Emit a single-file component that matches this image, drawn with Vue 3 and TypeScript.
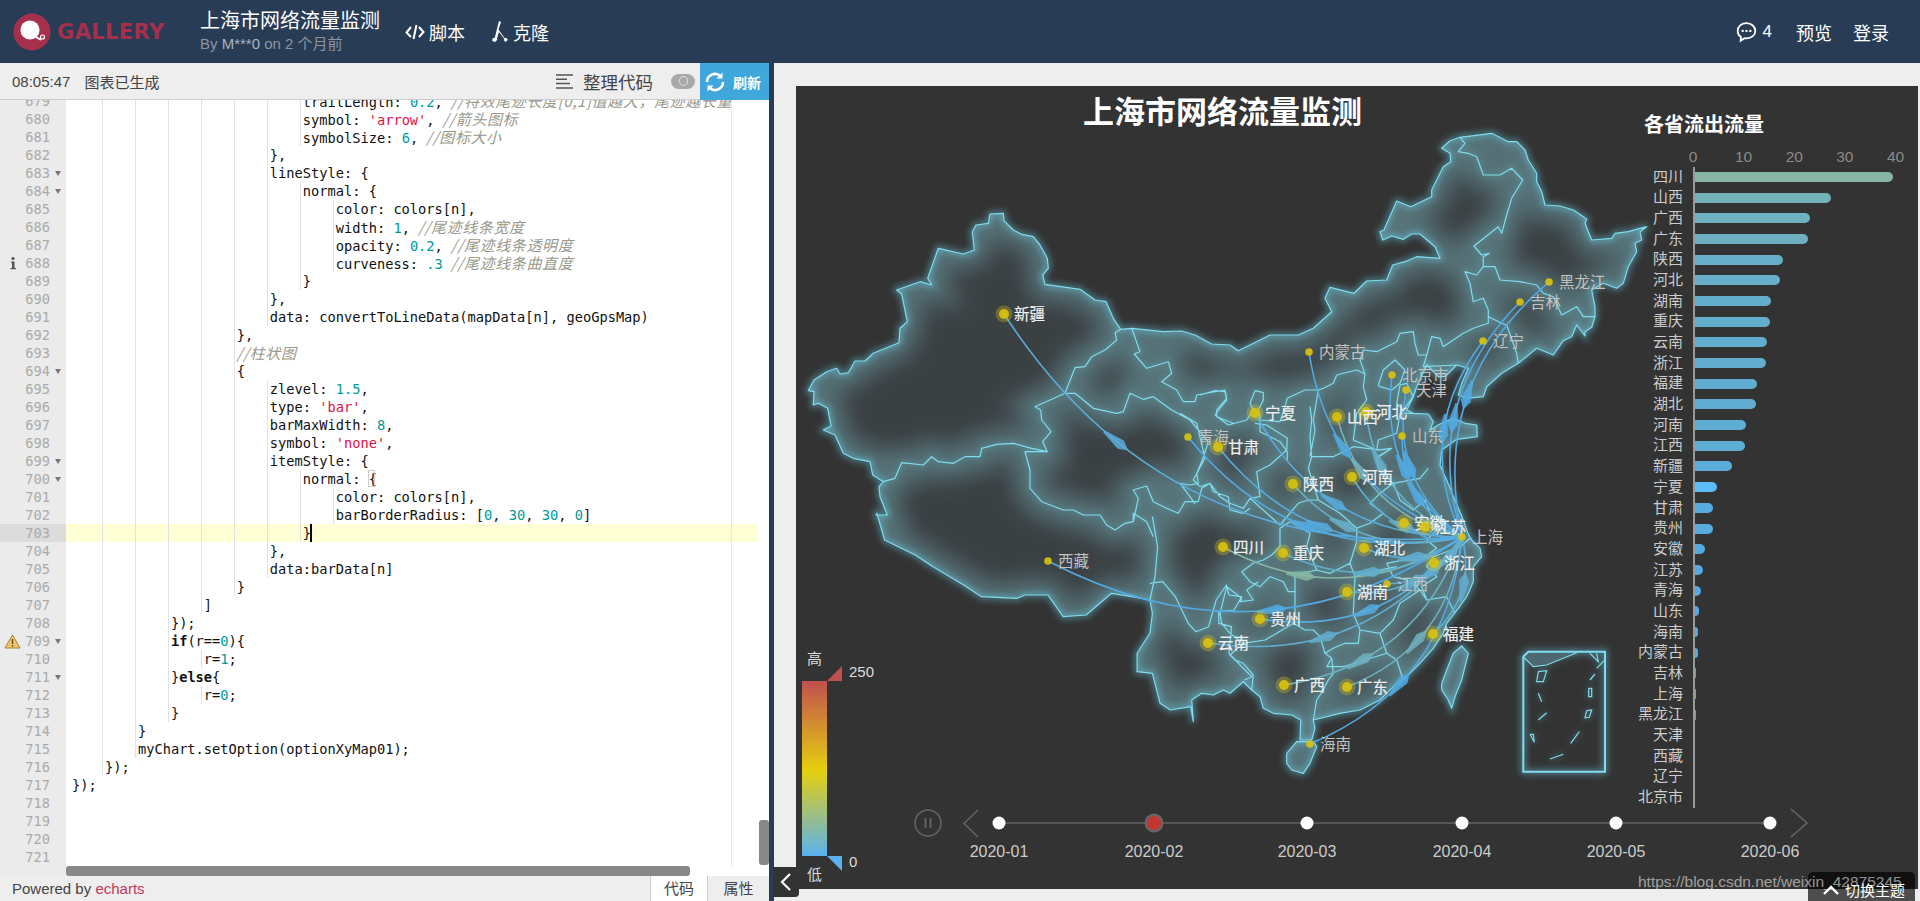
<template>
  <div class="page">
    <header class="topbar">
      <div class="logo">
        <svg width="38" height="38" viewBox="0 0 38 38">
          <circle cx="19" cy="19" r="18.500" fill="#a62f4c" />
          <circle cx="17" cy="17" r="9.600" fill="#fff" />
          <path d="M23 24l5 3" stroke="#fff" stroke-width="2" />
          <circle cx="29.500" cy="24" r="2" fill="#a62f4c" stroke="#fff" stroke-width="1.200" />
        </svg>
        <span class="logo-text">GALLERY</span>
      </div>
      <div class="work">
        <div class="work-title">上海市网络流量监测</div>
        <div class="work-by">By <em>M***0</em> on 2 个月前</div>
      </div>
      <a class="nav nav-script">
        <svg width="20" height="18" viewBox="0 0 20 18" fill="none" stroke="#fff" stroke-width="2">
          <path d="M6 4L1.500 9.500 6 14M14 4l4.500 5L14 14M11.500 2L8.500 16" />
        </svg>
        脚本
      </a>
      <a class="nav nav-clone">
        <svg width="19" height="21" viewBox="0 0 18 20" fill="#fff">
          <path d="M8.500 0l2 1-2.500 7 6 8.500 1.500-.5 1.500 2-2.500 2-1.500-2 .5-1-5-6.500-2 6.500L7 17.500 5 20l-3-1 .5-2.500 2-.5z" />
        </svg>
        克隆
      </a>
      <div class="top-right">
        <svg width="21" height="22" viewBox="0 0 19 20">
          <path d="M9.500 2C4.800 2 1.500 5 1.500 9c0 2.500 1.300 4.400 3 5.500L4.200 18l3.500-2.400c.6.1 1.200.2 1.800.2 4.700 0 8-3 8-6.800S14.200 2 9.500 2z" fill="none" stroke="#fff" stroke-width="1.600" />
          <circle cx="6" cy="9" r="1.100" fill="#fff" />
          <circle cx="9.500" cy="9" r="1.100" fill="#fff" />
          <circle cx="13" cy="9" r="1.100" fill="#fff" />
        </svg>
        <span class="count">4</span>
        <span class="top-link preview">预览</span>
        <span class="top-link">登录</span>
      </div>
    </header>

    <main class="main">
      <section class="editor">
        <div class="toolbar">
          <span class="time">08:05:47</span>
          <span class="status">图表已生成</span>
          <svg class="format-icon" width="18" height="15" viewBox="0 0 18 15" stroke="#555" stroke-width="1.500">
            <path d="M0 1h17M0 5.300h11M0 9.600h14M0 14h17" />
          </svg>
          <span class="format">整理代码</span>
          <span class="toggle"><i></i></span>
          <button class="refresh">
            <svg width="22" height="22" viewBox="0 0 22 22" fill="none" stroke="#fff" stroke-width="2.600">
              <path d="M3 11a8 8 0 0 1 13.500-5.800M19 11a8 8 0 0 1-13.500 5.800" />
              <path d="M18.500 1.500v6h-6M3.500 20.500v-6h6" fill="#fff" stroke="none" />
            </svg>
            刷新
          </button>
        </div>

        <div class="code-body">
          <div class="gutter">
            <div
              v-for="row in rows"
              :key="row.no"
              class="gutter-row"
              :class="{ 'gutter-active': row.no === 703 }"
            >
              <svg v-if="row.no === 688" class="mark" width="8" height="14" viewBox="0 0 8 14">
                <circle cx="4" cy="2.500" r="1.600" fill="#555" />
                <path d="M2 5.500h3.500v6.500H7v1.200H1.500V12H3V6.700H2z" fill="#555" />
              </svg>
              <svg v-if="row.no === 709" class="mark mark-warn" width="17" height="15" viewBox="0 0 17 15">
                <path d="M8.500 1L16 14H1z" fill="#f3c46b" stroke="#a8843a" />
                <path d="M8.500 5v5M8.500 11v1.500" stroke="#5c4a1e" stroke-width="1.400" />
              </svg>
              {{ row.no }}
              <i v-if="folds.includes(row.no)" class="fold"></i>
            </div>
          </div>
          <div class="lines">
            <div v-for="row in rows" :key="row.no" class="line" :class="{ 'line-active': row.no === 703 }">
              <i class="guides" :style="{ width: guideWidth(row.text) + 'px' }"></i>
              <span v-for="(tok, i) in row.tokens" :key="i" :class="tok.cls">{{ tok.text }}</span>
              <i v-if="row.no === 703" class="caret"></i>
              <i v-if="row.no === 700" class="bracket"></i>
            </div>
          </div>
          <i class="print-margin"></i>
          <i class="scroll-v"></i>
          <i class="scroll-h"></i>
        </div>

        <footer class="editor-foot">
          <span class="powered">Powered by <b>echarts</b></span>
          <span class="tab tab-on">代码</span>
          <span class="tab tab-attr">属性</span>
        </footer>
      </section>
      <div class="divider"></div>

      <section class="stage">
        <div class="chart">
          <div class="chart-title">上海市网络流量监测</div>
          <div class="bars-title">各省流出流量</div>

          <svg class="map" viewBox="796 86 1122 803" width="1122" height="803">
            <defs>
              <clipPath id="land"><path :d="landPath" /></clipPath>
              <filter id="blur-l" x="-20%" y="-20%" width="140%" height="140%"><feGaussianBlur stdDeviation="11" /></filter>
              <filter id="blur-s" x="-20%" y="-20%" width="140%" height="140%"><feGaussianBlur stdDeviation="3" /></filter>
            </defs>

            <path :d="landPath" fill="#3b4043" />
            <g clip-path="url(#land)">
              <path :d="allPath" fill="none" stroke="#86cfdc" stroke-opacity="0.36" stroke-width="30" filter="url(#blur-l)" />
            </g>
            <path :d="landPath + insetFrame" fill="none" stroke="#6cd4ee" stroke-opacity="0.5" stroke-width="5" filter="url(#blur-s)" />
            <path :d="innerPath + insetPath" fill="none" stroke="#6cd4ee" stroke-opacity="0.22" stroke-width="4" filter="url(#blur-s)" />
            <path :d="insetTop" fill="#4d6870" />
            <path :d="allPath" fill="none" stroke="#80dcee" stroke-width="1.200" stroke-linejoin="round" />
            <path :d="insetPath" fill="none" stroke="#80dcee" stroke-width="1.200" />
            <path :d="insetFrame" fill="none" stroke="#80dcee" stroke-width="2" />

            <path
              v-for="p in points.filter((c) => c.name !== '上海')"
              :key="p.name"
              :d="flowPath(p)"
              fill="none"
              :stroke="flowColor(p)"
              stroke-width="1.600"
            />
            <path
              v-for="(a, i) in arrows"
              :key="'a' + i"
              d="M10 0L-1 -6L-26 -1.500L-26 1.500L-1 6Z"
              :fill="a.color"
              fill-opacity="0.85"
              :transform="a.transform"
            />

            <g v-for="p in points" :key="'d' + p.name">
              <circle v-if="p.bright" :cx="p.x" :cy="p.y" r="8.500" fill="#e2cc1a" fill-opacity="0.3" />
              <circle :cx="p.x" :cy="p.y" :r="p.bright ? 5 : 3.800" fill="#d8c20f" fill-opacity="0.92" />
              <text :x="p.x + 10" :y="p.y + 5.500" class="map-label" :class="{ 'map-bright': p.bright }">{{ p.name }}</text>
            </g>

            <g class="timeline">
              <circle cx="928" cy="823" r="13" fill="none" stroke="#666" stroke-width="1.500" />
              <path d="M925.500 818v10M930.500 818v10" stroke="#666" stroke-width="1.800" />
              <path d="M978 810L964 823.500L978 837M1791 809L1807 823L1791 837" fill="none" stroke="#666" stroke-width="1.500" />
              <path d="M999 823H1770" stroke="#555" stroke-width="2" />
              <g v-for="(t, i) in times" :key="t.label">
                <template v-if="i === 1">
                  <circle :cx="t.x" cy="823" r="9.500" fill="#666" />
                  <circle :cx="t.x" cy="823" r="7" fill="#c23531" />
                </template>
                <circle v-else :cx="t.x" cy="823" r="6.500" fill="#fff" />
                <text :x="t.x" y="856.500" text-anchor="middle" class="time-label">{{ t.label }}</text>
              </g>
            </g>
          </svg>

          <div class="range">
            <span class="range-high">高</span>
            <span class="range-max">250</span>
            <i class="range-bar"></i>
            <i class="tri tri-top"></i>
            <i class="tri tri-bottom"></i>
            <span class="range-min">0</span>
            <span class="range-low">低</span>
          </div>

          <div class="bars">
            <div class="ticks"><span v-for="n in [0, 10, 20, 30, 40]" :key="n">{{ n }}</span></div>
            <div v-for="(b, i) in bars" :key="b.name" class="bar-row">
              <span class="bar-name">{{ b.name }}</span>
              <span class="bar-track">
                <i class="bar" :style="{ width: b.w + 'px', background: barColor(i, b.name) }"></i>
              </span>
            </div>
          </div>
        </div>
      </section>
    </main>

    <button class="side-toggle">
      <svg width="12" height="20" viewBox="0 0 12 20" fill="none" stroke="#fff" stroke-width="2.200"><path d="M10 2L2 10l8 8" /></svg>
    </button>
    <div class="theme">
      <svg width="16" height="10" viewBox="0 0 16 10" fill="none" stroke="#fff" stroke-width="2.400"><path d="M1 9l7-7 7 7" /></svg>
      切换主题
    </div>
    <div class="watermark">https://blog.csdn.net/weixin_42875245</div>
  </div>
</template>

<script setup lang="ts">
interface Token {
  text: string;
  cls: string;
}

interface CityPoint {
  name: string;
  x: number;
  y: number;
  bright: boolean;
}

const source: string[] = [
  "                            trailLength: 0.2, //特效尾迹长度[0,1]值越大，尾迹越长重",
  "                            symbol: 'arrow', //箭头图标",
  "                            symbolSize: 6, //图标大小",
  "                        },",
  "                        lineStyle: {",
  "                            normal: {",
  "                                color: colors[n],",
  "                                width: 1, //尾迹线条宽度",
  "                                opacity: 0.2, //尾迹线条透明度",
  "                                curveness: .3 //尾迹线条曲直度",
  "                            }",
  "                        },",
  "                        data: convertToLineData(mapData[n], geoGpsMap)",
  "                    },",
  "                    //柱状图",
  "                    {",
  "                        zlevel: 1.5,",
  "                        type: 'bar',",
  "                        barMaxWidth: 8,",
  "                        symbol: 'none',",
  "                        itemStyle: {",
  "                            normal: {",
  "                                color: colors[n],",
  "                                barBorderRadius: [0, 30, 30, 0]",
  "                            }",
  "                        },",
  "                        data:barData[n]",
  "                    }",
  "                ]",
  "            });",
  "            if(r==0){",
  "                r=1;",
  "            }else{",
  "                r=0;",
  "            }",
  "        }",
  "        myChart.setOption(optionXyMap01);",
  "    });",
  "});",
  "",
  "",
  "",
  "",
];

const folds = [683, 684, 694, 699, 700, 709, 711];

function tokenize(line: string): Token[] {
  const tokens: Token[] = [];
  const re = /(\/\/.*$)|('[^']*')|((?<![\w.])\.?\d+(?:\.\d+)?)|(\b(?:if|else)\b)/g;
  let last = 0;
  let m: RegExpExecArray | null;
  while ((m = re.exec(line))) {
    if (m.index > last) tokens.push({ text: line.slice(last, m.index), cls: "" });
    const cls = m[1] ? "t-comment" : m[2] ? "t-string" : m[3] ? "t-number" : "t-keyword";
    tokens.push({ text: m[0], cls });
    last = m.index + m[0].length;
  }
  if (last < line.length) tokens.push({ text: line.slice(last), cls: "" });
  return tokens;
}

const rows = source.map((text, i) => ({ no: 679 + i, text, tokens: tokenize(text) }));

// 缩进参考线
function guideWidth(line: string): number {
  const indent = line.length - line.trimStart().length;
  return Math.floor(indent / 4) * 33;
}

const bars = [
  { name: "四川", w: 198 }, { name: "山西", w: 136 }, { name: "广西", w: 115 }, { name: "广东", w: 113 },
  { name: "陕西", w: 88 }, { name: "河北", w: 85 }, { name: "湖南", w: 76 }, { name: "重庆", w: 75 },
  { name: "云南", w: 72 }, { name: "浙江", w: 71 }, { name: "福建", w: 62 }, { name: "湖北", w: 61 },
  { name: "河南", w: 51 }, { name: "江西", w: 50 }, { name: "新疆", w: 37 }, { name: "宁夏", w: 22 },
  { name: "甘肃", w: 18 }, { name: "贵州", w: 18 }, { name: "安徽", w: 10 }, { name: "江苏", w: 8 },
  { name: "青海", w: 6 }, { name: "山东", w: 4 }, { name: "海南", w: 3 }, { name: "内蒙古", w: 3 },
  { name: "吉林", w: 1 }, { name: "上海", w: 1 }, { name: "黑龙江", w: 1 }, { name: "天津", w: 0 },
  { name: "西藏", w: 0 }, { name: "辽宁", w: 0 }, { name: "北京市", w: 0 },
];

function mix(t: number): string {
  const a = [134, 182, 163];
  const b = [82, 170, 228];
  const c = a.map((v, i) => Math.round(v + (b[i] - v) * t));
  return `rgb(${c[0]},${c[1]},${c[2]})`;
}

function barColor(i: number, name: string): string {
  if (name === "宁夏") return "#5dbcf6";
  return mix(Math.min(1, Math.pow((198 - bars[i].w) / 198, 0.9)));
}

const times = [
  { label: "2020-01", x: 999 },
  { label: "2020-02", x: 1154 },
  { label: "2020-03", x: 1307 },
  { label: "2020-04", x: 1462 },
  { label: "2020-05", x: 1616 },
  { label: "2020-06", x: 1770 },
];

const SH = { x: 1462, y: 537 };

const points: CityPoint[] = [
  { name: "新疆", x: 1004, y: 314, bright: true },
  { name: "黑龙江", x: 1549, y: 282, bright: false },
  { name: "吉林", x: 1520, y: 302, bright: false },
  { name: "辽宁", x: 1483, y: 341, bright: false },
  { name: "内蒙古", x: 1309, y: 352, bright: false },
  { name: "北京市", x: 1392, y: 375, bright: false },
  { name: "天津", x: 1406, y: 390, bright: false },
  { name: "河北", x: 1366, y: 412, bright: true },
  { name: "山西", x: 1337, y: 417, bright: true },
  { name: "宁夏", x: 1255, y: 413, bright: true },
  { name: "青海", x: 1188, y: 437, bright: false },
  { name: "甘肃", x: 1218, y: 447, bright: true },
  { name: "山东", x: 1402, y: 436, bright: false },
  { name: "陕西", x: 1293, y: 484, bright: true },
  { name: "河南", x: 1352, y: 477, bright: true },
  { name: "安徽", x: 1404, y: 523, bright: true },
  { name: "江苏", x: 1425, y: 527, bright: true },
  { name: "上海", x: 1462, y: 537, bright: false },
  { name: "四川", x: 1223, y: 547, bright: true },
  { name: "重庆", x: 1283, y: 553, bright: true },
  { name: "湖北", x: 1364, y: 548, bright: true },
  { name: "浙江", x: 1434, y: 563, bright: true },
  { name: "江西", x: 1387, y: 584, bright: false },
  { name: "湖南", x: 1347, y: 592, bright: true },
  { name: "贵州", x: 1260, y: 619, bright: true },
  { name: "云南", x: 1208, y: 643, bright: true },
  { name: "福建", x: 1433, y: 634, bright: true },
  { name: "广西", x: 1284, y: 685, bright: true },
  { name: "广东", x: 1347, y: 687, bright: true },
  { name: "海南", x: 1310, y: 744, bright: false },
  { name: "西藏", x: 1048, y: 561, bright: false },
];

function control(p: CityPoint) {
  const c = -0.3;
  return {
    x: (p.x + SH.x) / 2 - (p.y - SH.y) * c,
    y: (p.y + SH.y) / 2 - (SH.x - p.x) * c,
  };
}

function flowPath(p: CityPoint): string {
  const cp = control(p);
  return `M${p.x} ${p.y}Q${cp.x} ${cp.y} ${SH.x} ${SH.y}`;
}

function flowColor(p: CityPoint): string {
  const b = bars.find((v) => v.name === p.name);
  return mix(Math.min(1, Math.pow((198 - (b ? b.w : 0)) / 198, 0.9)));
}

// 尾迹箭头：取曲线上某一点，方向沿切线
const arrowAt: [string, number][] = [
  ["新疆", 0.32], ["青海", 0.5], ["甘肃", 0.5], ["宁夏", 0.5], ["陕西", 0.38], ["山西", 0.35],
  ["内蒙古", 0.42], ["河北", 0.35], ["北京市", 0.55], ["天津", 0.5], ["山东", 0.55], ["黑龙江", 0.52],
  ["吉林", 0.56], ["辽宁", 0.5], ["河南", 0.6], ["四川", 0.35], ["重庆", 0.5], ["湖北", 0.55],
  ["湖南", 0.55], ["西藏", 0.55], ["贵州", 0.5], ["云南", 0.42], ["广西", 0.35], ["广东", 0.45],
  ["海南", 0.42], ["福建", 0.6], ["浙江", 0.5], ["江西", 0.55],
];

const arrows = arrowAt.map(([name, t]) => {
  const p = points.find((v) => v.name === name) as CityPoint;
  const cp = control(p);
  const u = 1 - t;
  const x = u * u * p.x + 2 * u * t * cp.x + t * t * SH.x;
  const y = u * u * p.y + 2 * u * t * cp.y + t * t * SH.y;
  const dx = 2 * u * (cp.x - p.x) + 2 * t * (SH.x - cp.x);
  const dy = 2 * u * (cp.y - p.y) + 2 * t * (SH.y - cp.y);
  const angle = (Math.atan2(dy, dx) * 180) / Math.PI;
  return { transform: `translate(${x} ${y}) rotate(${angle}) scale(0.85)`, color: flowColor(p) };
});

// 地图轮廓坐标取自四块放大截图，这里换算回页面坐标
type Frame = [number, number, number, number];
const Z9: Frame = [800, 200, 3, 3];
const Z7: Frame = [1200, 120, 3, 3];
const Z8: Frame = [1180, 400, 3, 3];
const Z4: Frame = [780, 480, 1.96, 3];

function toPts(f: Frame, s: string): string[] {
  return s.trim().split(/\s+/).map((pair) => {
    const [x, y] = pair.split(",").map(Number);
    return `${(f[0] + x / f[2]).toFixed(1)} ${(f[1] + y / f[3]).toFixed(1)}`;
  });
}

function toPath(parts: [Frame, string][], close = false): string {
  const pts = parts.flatMap(([f, s]) => toPts(f, s));
  return "M" + pts.join("L") + (close ? "Z" : "");
}

const outer = toPath([
  [Z9, "570,42 610,40 612,62 640,90 665,103 700,110 720,135 742,175 745,205 728,225 735,253 840,268 885,300 918,305 940,355 962,388 995,385 1090,395 1145,393 1185,405 1235,432 1290,435 1315,452 1380,420"],
  [Z7, "210,645 295,645 340,625 395,575 375,535 390,502 462,520 500,483 560,480 578,435 615,425 650,410 720,415 705,380 660,342 635,342 610,358 575,348 548,360 540,335 552,330 590,243 632,260 695,230 695,210 730,140 752,125 750,100 725,85 750,62 780,52 875,40 925,65 950,65 975,90 985,120 1010,160 1010,185 1025,215 1035,255 1080,258 1120,270 1160,297 1155,310 1175,360 1235,355 1245,340 1285,335 1340,320 1320,335 1325,360 1305,370 1310,395 1285,440 1270,490 1250,505 1210,490 1175,510 1185,560 1185,590 1175,622 1155,635 1155,648 1130,615 1115,650 1090,662 1060,705 1010,685 955,730 905,760 860,800 850,830 800,835 775,825 785,790 805,745 770,735 735,770 715,770 680,735 650,800 640,830 620,870 640,880 685,882 700,905 690,930 720,912 760,895 795,910 830,915 832,950 770,958"],
  [Z8, "785,150 780,195 800,240 825,300 850,360 862,395 875,420 900,445 905,470 880,500 880,545 860,590 835,625 800,670 790,700 760,745 720,790 670,840 650,850 600,900 540,930 480,940 400,960 405,985 395,1020 360,1020 362,960 335,945 280,940 250,925 240,890 215,870 190,845 150,880 130,870 100,885 65,880 35,900 40,965"],
  [Z4, "805,680 765,690 745,670 730,580 700,575 700,520 725,460 730,400 725,360 690,350 650,340 600,405 555,410 525,345 480,345 465,355 395,350 360,315 300,260 265,225 205,180 190,100"],
  [Z9, "228,945 262,945 240,890 237,860 250,845 218,825 210,785 160,775 130,760 105,705 70,690 93,678 83,625 55,610 40,615 42,575 25,572 42,540 80,515 110,505 120,522 145,518 165,483 195,483 220,460 297,428 300,385 322,365 305,283 290,270 360,245 395,255 383,235 415,145 490,162 523,150 517,95 528,75 565,70"],
], true);

const taiwan = toPath([[Z8, "785,850 800,810 820,760 845,738 865,760 845,840 825,890 815,925 805,900 785,870"]], true);
const hainan = toPath([[Z8, "320,1060 350,1025 400,1025 410,1040 390,1090 370,1120 335,1110 320,1090"]], true);

const inner: [Frame, string][] = [
  [Z9, "962,388 945,398 950,420 915,450 875,470 855,500 825,503 795,580 705,620 722,630 725,660 753,695 728,725 742,755 675,755 690,810 690,865 725,905 790,930 820,930 850,945 900,945 920,975 945,990 975,970 1000,965 1000,940 1040,965 1060,1010"],
  [Z9, "742,755 695,745 640,730 590,733 545,745 540,770 495,770 460,790 415,785 395,770 370,795 305,788 285,835 250,845"],
  [Z9, "995,385 1020,455 1003,462 1040,505 1105,485 1115,520 1085,545 1130,570 1150,605 1185,605 1190,585 1275,570 1280,595 1250,630 1250,650 1300,670"],
  [Z9, "795,580 825,580 850,600 880,625 950,640 970,635 990,580 1030,598 1060,590 1115,630 1170,660 1225,725 1205,785 1190,820 1195,850 1170,855 1140,850 1170,890 1185,912"],
  [Z9, "1000,965 1015,895 1000,870 1040,858 1060,905 1100,925 1135,940 1155,905 1195,905 1205,865 1230,850 1240,875 1285,890 1290,930 1330,940 1350,925"],
  [Z4, "730,110 740,200 735,290 725,360"],
  [Z4, "725,310 750,305 775,350 800,430 815,455 840,440 855,360 875,315 880,345 905,350 890,390 860,395 860,430 885,440 880,520 905,560 925,590 910,600"],
  [Z7, "0,825 45,812 75,815 80,840 45,885 85,915 140,900 160,870 150,850 165,812 190,818 190,840 175,870 180,885 180,935 240,965 262,995 262,1020"],
  [Z7, "180,900 240,905 255,860 262,835 315,810 355,810 370,805 400,790 410,765 470,750 495,762 480,720 490,690 530,695 590,665 600,640 640,635 645,670 655,705 680,705 695,650 720,655 730,680 790,640 820,625 865,610 865,570 850,535 820,545 810,490 795,455 830,465 850,440 885,440 900,480 960,485 1010,495 1030,520 1060,530 1085,585 1130,560 1150,590 1185,590"],
  [Z7, "850,440 850,410 868,400 845,405 822,378 895,320 905,340 920,285 935,235 968,180 935,145 900,165 850,165 830,110 805,100 775,95 795,70 780,52"],
  [Z7, "865,590 905,610 920,615 950,700 955,730"],
  [Z7, "680,705 670,740 770,735"],
  [Z7, "355,810 340,900 345,930 330,1010"],
  [Z7, "495,762 490,800 500,840 470,880 460,960 530,990 535,960 590,940 600,880 640,880"],
  [Z7, "535,795 550,750 585,720 615,750 600,790 575,810 540,800 535,795"],
  [Z7, "600,795 620,790 640,830 610,870 590,850 600,795"],
  [Z7, "530,990 575,985 530,1012 530,1020"],
  [Z8, "0,40 50,70 75,175 40,240 60,260"],
  [Z8, "390,20 395,60 390,110 395,170 385,205 415,300 480,340 530,385 570,370 610,340 570,310 600,280 640,250 720,235 745,205"],
  [Z8, "395,170 460,170 520,140 600,150 635,145 590,175 600,215 640,250"],
  [Z8, "640,250 660,300 700,330 735,300 750,340 770,390 740,420 770,445 720,480 670,480 620,490 640,530 680,540 720,570 740,600 725,560 770,530 740,500 760,470 840,440 870,415"],
  [Z8, "530,385 530,425 510,490"],
  [Z8, "210,295 240,290 230,215 270,195 320,150 322,115 260,75 225,70"],
  [Z8, "60,260 90,250 120,290 150,310 190,325 210,295 300,375 355,310 385,300 415,300"],
  [Z8, "300,385 330,365 390,400 380,440 410,510"],
  [Z8, "300,385 300,440 275,465 250,480 220,490 185,515 210,545 240,560 270,530 310,545 325,575 345,575 345,525 410,510 450,520 510,490 525,530 600,510 650,500"],
  [Z8, "345,575 345,640 340,670 375,690 400,690 420,710 435,760 455,775 440,800 490,800 620,760 650,780 670,840"],
  [Z8, "525,530 520,640 540,690 535,730 495,730 460,745 435,760"],
  [Z8, "455,775 460,820 445,840 430,870 410,900 400,960"],
  [Z8, "340,670 290,700 255,720 190,730 150,765 165,780 190,790 220,825 215,870"],
  [Z8, "120,640 125,670 150,700 190,730"],
  [Z8, "120,640 140,560 185,595 180,605 220,600 200,570 235,545"],
  [Z8, "660,610 640,660 600,700 620,760"],
  [Z8, "660,610 720,570"],
  [Z8, "740,600 800,590 825,640"],
  [Z8, "540,690 600,700"],
];

const innerPath = inner.map((part) => toPath([part])).join("");
const landPath = outer + taiwan + hainan;
const allPath = landPath + innerPath;

const insetFrame = toPath([[Z8, "1030,770 1045,755 1275,755 1275,1115 1030,1115"]], true);
const insetTop = toPath([[Z8, "1030,770 1045,755 1190,757 1100,795 1060,800"]], true);
const insetPath = [
  "1030,770 1060,800 1100,795 1190,758",
  "1075,815 1100,812 1090,845 1070,845 1075,815",
  "1075,880 1085,905",
  "1226,865 1235,865 1235,890 1226,890 1226,865",
  "1075,960 1100,938",
  "1050,1003 1060,1003 1063,1027 1050,1003",
  "1220,932 1235,930 1228,952 1215,953 1220,932",
  "1172,1030 1198,995",
  "1110,1077 1150,1063",
  "1230,840 1245,822",
  "1230,760 1255,785 1250,760",
  "1250,805 1272,782",
].map((s) => toPath([[Z8, s]])).join("");
</script>

<style scoped>
.page {
  position: relative;
  display: flex;
  flex-direction: column;
  width: 1920px;
  height: 901px;
  overflow: hidden;
  font-family: "Liberation Sans", "Noto Sans CJK SC", sans-serif;
  background: #eee;
}

.topbar {
  display: flex;
  align-items: center;
  flex: 0 0 63px;
  color: #fff;
  background: #293c55;
}

.logo {
  display: flex;
  align-items: center;
  gap: 6px;
  width: 200px;
  padding-left: 13px;
  box-sizing: border-box;
}

.logo-text {
  font-family: "DejaVu Sans", sans-serif;
  font-size: 21px;
  font-weight: 700;
  letter-spacing: 0.4px;
  color: #a62f4c;
}

.work {
  width: 205px;
}

.work-title {
  font-size: 20px;
  line-height: 26px;
  margin-top: -2px;
}

.work-by {
  font-size: 15px;
  line-height: 20px;
  color: #8c96a3;
}

.work-by em {
  font-style: normal;
  color: #aab2bc;
}

.nav {
  display: flex;
  align-items: center;
  gap: 4px;
  font-size: 18px;
}

.nav-clone {
  margin-left: 25px;
}

.top-right {
  display: flex;
  align-items: center;
  margin-left: auto;
  padding-right: 31px;
}

.count {
  margin-left: 6px;
  font-size: 17px;
}

.top-link {
  margin-left: 21px;
  font-size: 18px;
}

.preview {
  margin-left: 24px;
}

.main {
  display: flex;
  flex: 1;
  min-height: 0;
}

.editor {
  display: flex;
  flex-direction: column;
  width: 769px;
}

.toolbar {
  display: flex;
  align-items: center;
  flex: 0 0 36px;
  padding-left: 12px;
  border-bottom: 1px solid #ccc;
  font-size: 15px;
  color: #444;
  background: #eee;
}

.status {
  margin-left: 14px;
}

.format-icon {
  margin-left: auto;
}

.format {
  margin-left: 9px;
  font-size: 17.500px;
}

.toggle {
  display: flex;
  align-items: center;
  justify-content: center;
  width: 24px;
  height: 15px;
  margin: 0 5px 0 18px;
  border-radius: 8px;
  background: #a9a9a9;
}

.toggle i {
  width: 9px;
  height: 10px;
  border: 1px solid #ddd;
  border-radius: 50%;
  box-sizing: border-box;
}

.refresh {
  display: flex;
  align-items: center;
  gap: 7px;
  width: 69px;
  height: 37px;
  margin-bottom: -1px;
  padding: 0 0 0 4px;
  border: 0;
  font-family: inherit;
  font-size: 14px;
  font-weight: 700;
  color: #fff;
  background: #3fa7dc;
}

.code-body {
  position: relative;
  display: flex;
  flex: 1;
  min-height: 0;
  overflow: hidden;
  background: #fff;
}

.gutter {
  flex: 0 0 66px;
  margin-top: -8px;
  font-family: "DejaVu Sans Mono", "Liberation Mono", monospace;
  font-size: 13.700px;
  color: #aaa;
  background: #ebebeb;
}

.gutter-row {
  position: relative;
  height: 18px;
  padding-right: 16px;
  line-height: 18px;
  text-align: right;
}

.gutter-active {
  background: #dcdcdc;
}

.fold {
  position: absolute;
  top: 7px;
  left: 55px;
  border-top: 5px solid #777;
  border-right: 3px solid transparent;
  border-left: 3px solid transparent;
}

.mark {
  position: absolute;
  top: 2px;
  left: 9px;
}

.mark-warn {
  left: 4px;
}

.lines {
  flex: 1;
  min-width: 0;
  margin-top: -8px;
  font-family: "DejaVu Sans Mono", "Liberation Mono", "Noto Sans CJK SC", monospace;
  font-size: 13.700px;
  color: #111;
}

.line {
  position: relative;
  width: 692px;
  height: 18px;
  padding-left: 6px;
  box-sizing: border-box;
  line-height: 18px;
  white-space: pre;
  overflow: hidden;
}

.line-active {
  background: #ffffd6;
}

.guides {
  position: absolute;
  top: 0;
  bottom: 0;
  left: 4px;
  background: repeating-linear-gradient(90deg, transparent 0 32px, #e2e2e2 32px 33px);
}

.t-comment {
  font-family: "Noto Sans CJK SC", "DejaVu Sans Mono", monospace;
  font-size: 15px;
  font-style: italic;
  letter-spacing: 0.6px;
  color: #99998a;
}

.t-string {
  color: #dd1144;
}

.t-number {
  color: #009999;
}

.t-keyword {
  font-weight: 700;
}

.caret {
  position: absolute;
  top: 0;
  left: 244px;
  width: 2px;
  height: 18px;
  background: #000;
}

.bracket {
  position: absolute;
  top: 0;
  left: 302px;
  width: 7px;
  height: 17px;
  border: 1px solid #ccc;
  box-sizing: border-box;
}

.print-margin {
  position: absolute;
  top: 0;
  bottom: 10px;
  left: 731px;
  width: 1px;
  background: #e8e8e8;
}

.scroll-v {
  position: absolute;
  right: 0;
  bottom: 11px;
  width: 10px;
  height: 45px;
  border-radius: 3px;
  background: #888;
}

.scroll-h {
  position: absolute;
  bottom: 0;
  left: 66px;
  width: 624px;
  height: 10px;
  border-radius: 3px;
  background: #888;
}

.editor-foot {
  display: flex;
  align-items: stretch;
  flex: 0 0 25px;
  font-size: 15px;
  color: #444;
  background: #eee;
}

.powered {
  align-self: center;
  margin-right: auto;
  padding-left: 12px;
}

.powered b {
  font-weight: 400;
  color: #c23a5a;
}

.tab {
  width: 56px;
  border-left: 1px solid #ccc;
  line-height: 25px;
  text-align: center;
}

.tab-on {
  background: #fff;
}

.tab-attr {
  width: 61px;
}

.divider {
  flex: 0 0 5px;
  background: #293c55;
}

.stage {
  flex: 1;
  padding: 23px 2px 12px 22px;
  min-width: 0;
}

.chart {
  position: relative;
  width: 1122px;
  height: 803px;
  overflow: hidden;
  background: #333;
}

.map {
  position: absolute;
  top: 0;
  left: 0;
}

.chart-title {
  position: absolute;
  top: 7px;
  left: 287px;
  z-index: 1;
  font-size: 31px;
  font-weight: 700;
  line-height: 40px;
  color: #fff;
}

.bars-title {
  position: absolute;
  top: 26px;
  left: 848px;
  z-index: 1;
  font-size: 20px;
  font-weight: 700;
  line-height: 26px;
  color: #fff;
}

.map-label {
  font-size: 15.500px;
  fill: #c2c2c2;
}

.map-bright {
  fill: #f0f0f0;
  stroke: #f0f0f0;
  stroke-width: 0.2px;
}

.time-label {
  font-size: 16px;
  fill: #ccc;
}

.range-high,
.range-low,
.range-max,
.range-min {
  position: absolute;
  font-size: 15px;
  line-height: 18px;
  color: #ddd;
}

.range-high {
  top: 564px;
  left: 11px;
}

.range-low {
  top: 780px;
  left: 11px;
}

.range-max {
  top: 577px;
  left: 53px;
}

.range-min {
  top: 767px;
  left: 53px;
}

.range-bar {
  position: absolute;
  top: 595px;
  left: 6px;
  width: 25px;
  height: 175px;
  background: linear-gradient(180deg, #c05050 0%, #e5cf0d 51%, #5ab1ef 100%);
}

.tri {
  position: absolute;
  left: 31px;
  width: 0;
  height: 0;
}

.tri-top {
  top: 580px;
  border-bottom: 15px solid #c05050;
  border-left: 15px solid transparent;
}

.tri-bottom {
  top: 770px;
  border-top: 15px solid #5ab1ef;
  border-left: 15px solid transparent;
}

.bars {
  position: absolute;
  top: 60.500px;
  left: 797px;
  width: 310px;
}

.ticks {
  display: flex;
  justify-content: space-between;
  width: 202.500px;
  height: 20px;
  margin-left: 100px;
  font-size: 15.500px;
  line-height: 20px;
  color: #8a8a8a;
}

.ticks span {
  display: flex;
  justify-content: center;
  width: 0;
}

.bar-row {
  display: flex;
  height: 20.700px;
  align-items: stretch;
}

.bar-name {
  flex: 0 0 90px;
  font-size: 15px;
  line-height: 20.700px;
  text-align: right;
  color: #ccc;
}

.bar-track {
  display: flex;
  align-items: center;
  margin-left: 10px;
  border-left: 2px solid #999;
}

.bar {
  height: 10px;
  border-radius: 0 5px 5px 0;
}

.side-toggle {
  position: absolute;
  top: 867px;
  left: 773px;
  display: flex;
  align-items: center;
  justify-content: center;
  width: 26px;
  height: 30px;
  padding: 0;
  border: 0;
  border-radius: 0 0 4px 0;
  background: #333;
}

.theme {
  position: absolute;
  right: 5px;
  bottom: 0;
  z-index: 2;
  display: flex;
  align-items: center;
  gap: 6px;
  width: 107px;
  height: 29px;
  padding: 6px 0 0 15px;
  box-sizing: border-box;
  border-radius: 5px 5px 0 0;
  font-size: 15px;
  color: #fff;
  background: rgba(0, 0, 0, 0.68);
}

.watermark {
  position: absolute;
  top: 873px;
  left: 1638px;
  z-index: 3;
  font-size: 15.500px;
  line-height: 18px;
  white-space: nowrap;
  color: rgba(230, 230, 230, 0.62);
}
</style>

<style>
body {
  background: #eee;
}
</style>
